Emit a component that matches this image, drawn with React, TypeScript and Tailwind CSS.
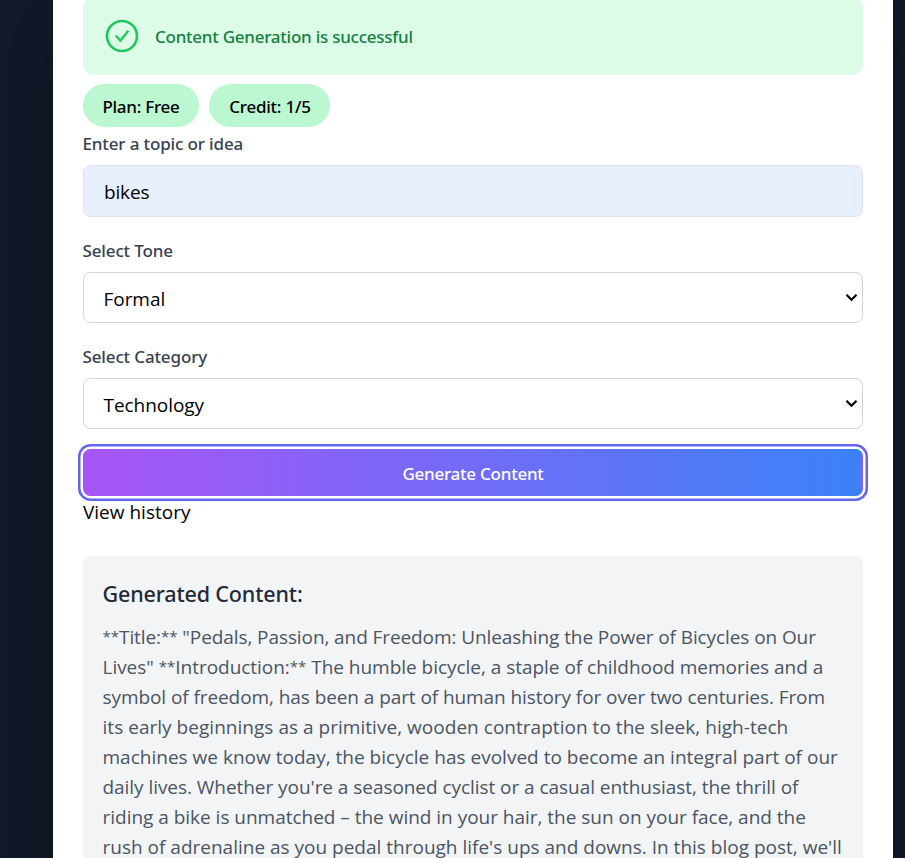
import { Fragment, ReactNode } from "react";

const lines: { text: string; tracking: string }[] = [
  { text: '**Title:** "Pedals, Passion, and Freedom: Unleashing the Power of Bicycles on Our', tracking: "tracking-[-0.09px]" },
  { text: 'Lives" **Introduction:** The humble bicycle, a staple of childhood memories and a', tracking: "tracking-[-0.03px]" },
  { text: "symbol of freedom, has been a part of human history for over two centuries. From", tracking: "tracking-[-0.077px]" },
  { text: "its early beginnings as a primitive, wooden contraption to the sleek, high-tech", tracking: "tracking-[0.03px]" },
  { text: "machines we know today, the bicycle has evolved to become an integral part of our", tracking: "tracking-[0.01px]" },
  { text: "daily lives. Whether you're a seasoned cyclist or a casual enthusiast, the thrill of", tracking: "tracking-[-0.05px]" },
  { text: "riding a bike is unmatched – the wind in your hair, the sun on your face, and the", tracking: "tracking-[-0.02px]" },
  { text: "rush of adrenaline as you pedal through life's ups and downs. In this blog post, we'll", tracking: "tracking-[0px]" },
];

// Markdown emphasis marks are drawn smaller than the words around them.
function Line({ text }: { text: string }) {
  return (
    <>
      {text.split("**").map((part, i) => (
        <Fragment key={i}>
          {i > 0 && <span className="align-[2px] text-[15px] leading-none tracking-[0px]">**</span>}
          {part}
        </Fragment>
      ))}
    </>
  );
}

function Label({ children }: { children: ReactNode }) {
  return (
    <label className="-ml-[0.5px] block h-[25px] font-['Noto_Sans',sans-serif] text-[17px] leading-[25px] font-medium tracking-[-0.14px] text-[#374151]">
      {children}
    </label>
  );
}

function Select({ value }: { value: string }) {
  return (
    <div className="mt-[9px] flex h-[51px] items-center justify-between rounded-[7.5px] border border-[#d1d5db] bg-white pr-[4.5px] pl-5 text-[19px] tracking-[-0.05px] text-black">
      <span className="-ml-[0.5px] pt-[3px]">{value}</span>
      <svg width="13" height="9" viewBox="0 0 13 9" fill="none" stroke="#000" strokeWidth="2.2">
        <path d="M1.5 1.8 6.5 6.8 11.5 1.8" />
      </svg>
    </div>
  );
}

export default function App() {
  return (
    <div className="flex h-[858px] overflow-hidden bg-[#111827] pl-[53px] font-['Open_Sans','Noto_Sans',sans-serif] text-[19px]">
      <main className="h-[900px] w-[840px] shrink-0 bg-white px-[30px] shadow-2xl">
        <div className="-mt-[3px] flex h-[78px] items-center rounded-[10px] bg-[#dcfce7] pt-[3px] pl-[19px]">
          <svg className="-mt-1" width="40" height="40" viewBox="0 0 24 24" fill="none" stroke="#22c55e">
            <circle cx="12" cy="12" r="9" strokeWidth="1.6" />
            <path d="m8.3 11.7 2.7 3.1 4.8-5.9" strokeWidth="1.4" />
          </svg>
          <span className="-mt-[2px] ml-[13px] font-['Noto_Sans',sans-serif] text-[17px] font-medium tracking-[-0.25px] text-[#15803d]">
            Content Generation is successful
          </span>
        </div>
        <div className="mt-[9px] flex gap-[10px] font-['Noto_Sans',sans-serif] text-[17px] font-medium tracking-[-0.25px] text-black">
          <span className="flex h-[43px] w-[116px] items-center justify-center rounded-full bg-[#bbf7d0] pt-[3px]">Plan: Free</span>
          <span className="flex h-[43px] w-[121px] items-center justify-center rounded-full bg-[#bbf7d0] pt-[3px] pl-px">Credit: 1/5</span>
        </div>
        <div className="mt-[4px]">
          <Label>Enter a topic or idea</Label>
          <div className="mt-[9px] flex h-[52px] items-center rounded-[7.5px] border border-[#dfe3ea] bg-[#e8f0fe] pt-[2px] pl-5 tracking-[-0.15px] text-black">
            bikes
          </div>
        </div>
        <div className="mt-[21px]">
          <Label>Select Tone</Label>
          <Select value="Formal" />
        </div>
        <div className="mt-[21px]">
          <Label>Select Category</Label>
          <Select value="Technology" />
        </div>
        <button className="mt-5 flex h-[47px] w-full items-center justify-center rounded-[7.5px] border border-transparent bg-[linear-gradient(to_right,#a855f7,#3b82f6)] font-['Noto_Sans',sans-serif] text-[17px] font-medium tracking-[-0.24px] text-white shadow-[0_0_0_2.5px_#fff,0_0_0_5px_#6366f1]">
          <span className="pt-[3px]">Generate Content</span>
        </button>
        <p className="mt-px h-[30px] leading-[30px] text-black">View history</p>
        <section className="mt-[29px] h-[360px] rounded-[7.5px] bg-[#f3f4f6] px-5 pt-5">
          <h2 className="-ml-[0.5px] h-[35px] font-['Noto_Sans',sans-serif] text-[21.5px] leading-[35px] font-medium tracking-[-0.14px] text-[#1f2937]">
            Generated Content:
          </h2>
          <p className="mt-[11px] -ml-[0.5px] text-[19px] leading-[30px] text-[#4b5563]">
            {lines.map((line) => (
              <span key={line.text} className={`block h-[30px] whitespace-nowrap ${line.tracking}`}>
                <Line text={line.text} />
              </span>
            ))}
          </p>
        </section>
      </main>
    </div>
  );
}
